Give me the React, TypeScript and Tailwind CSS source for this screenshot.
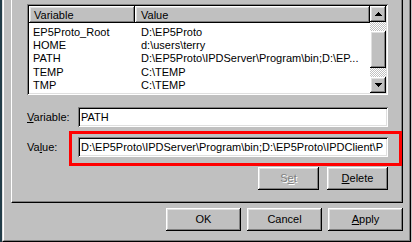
import React from "react";

// Win95 bevels
const raised = "shadow-[inset_-1px_-1px_#000,inset_1px_1px_#fff,inset_-2px_-2px_#808080,inset_2px_2px_#dfdfdf]";
const sunken = "shadow-[inset_1px_1px_#808080,inset_-1px_-1px_#fff,inset_2px_2px_#000,inset_-2px_-2px_#dfdfdf]";

function Arrow({ down }: { down?: boolean }) {
    return (
        <svg width="7" height="4" viewBox="0 0 7 4" shapeRendering="crispEdges">
            {down ? (
                <path d="M0 0h7v1h-1v1h-1v1h-1v1h-1v-1h-1v-1h-1v-1h-1z" fill="#000" />
            ) : (
                <path d="M3 0h1v1h1v1h1v1h1v1H0V3h1V2h1V1h1z" fill="#000" />
            )}
        </svg>
    );
}

function Button({ children, w, disabled }: { children: React.ReactNode; w: string; disabled?: boolean }) {
    return (
        <button
            type="button"
            className={`${w} h-[23px] flex items-center justify-center bg-[#c0c0c0] ${raised} ${
                disabled ? "text-[#808080] [text-shadow:1px_1px_0_#fff]" : "text-black"
            }`}
        >
            {children}
        </button>
    );
}

const rows = [
    ["EP5Proto_Root", "D:\\EP5Proto"],
    ["HOME", "d:\\users\\terry"],
    ["PATH", "D:\\EP5Proto\\IPDServer\\Program\\bin;D:\\EP..."],
    ["TEMP", "C:\\TEMP"],
    ["TMP", "C:\\TEMP"],
];

function ListView() {
    return (
        <div className={`w-[361px] h-[91px] p-[2px] flex bg-white ${sunken}`}>
            <div className="flex-1 flex flex-col overflow-hidden">
                {/* column headers */}
                <div className="h-[17px] flex bg-[#c0c0c0] shrink-0">
                    <div className={`w-[106px] pl-[5px] pt-[3px] leading-[13px] ${raised}`}>Variable</div>
                    <div className={`flex-1 pl-[6px] pt-[3px] leading-[13px] ${raised}`}>Value</div>
                </div>
                <div className="flex-1 pt-[2.6px] overflow-hidden">
                    {rows.map(([name, value]) => (
                        <div key={name} className="flex h-[13.4px] leading-[13.4px] whitespace-nowrap">
                            <div className="w-[106px] pl-[4px]">{name}</div>
                            <div className="flex-1 pl-[6px]">{value}</div>
                        </div>
                    ))}
                </div>
            </div>

            {/* scrollbar */}
            <div className="w-[16px] flex flex-col">
                <div className={`h-[16px] flex items-center justify-center bg-[#c0c0c0] ${raised}`}>
                    <Arrow />
                </div>
                <div className="h-[9px] bg-[repeating-conic-gradient(#c0c0c0_0_25%,#fff_0_50%)] bg-[length:2px_2px]" />
                <div className={`h-[37px] bg-[#c0c0c0] ${raised}`} />
                <div className="flex-1 bg-[repeating-conic-gradient(#c0c0c0_0_25%,#fff_0_50%)] bg-[length:2px_2px]" />
                <div className={`h-[16px] flex items-center justify-center bg-[#c0c0c0] ${raised}`}>
                    <Arrow down />
                </div>
            </div>
        </div>
    );
}

function Field({ children }: { children: React.ReactNode }) {
    return (
        <div className={`w-[310px] h-[20px] bg-white pl-[3px] pr-[2px] flex items-center overflow-hidden whitespace-nowrap ${sunken}`}>
            <span>{children}</span>
        </div>
    );
}

export default function App() {
    return (
        <div className="relative flex w-[412px] h-[242px] overflow-hidden bg-[#c0c0c0] border-l-2 border-[#213c48] font-['Liberation_Sans',Arial,sans-serif] text-[11px] text-black">
            <div className="flex flex-col w-[409px] h-[242px] border-l border-l-[#dfdfdf] border-r border-r-black border-b border-b-black">
                <div className="flex flex-1 flex-col pl-[7px] pr-[6px] border-l border-l-white border-r border-r-[#808080] border-b border-b-[#808080]">

                    {/* Environment tab page */}
                    <div className="w-[392px] h-[203px] border-l border-l-white border-r border-r-black border-b border-b-black shadow-[inset_-1px_-1px_#808080]">
                        <div className="pl-[15px] pt-[4px] flex flex-col">
                            <ListView />

                            <div className="mt-[12px] flex items-center">
                                <div className="w-[51px]">
                                    <span className="underline">V</span>ariable:
                                </div>
                                <Field>PATH</Field>
                            </div>

                            <div className="mt-[10px] flex items-center">
                                <div className="w-[51px]">
                                    Va<span className="underline">l</span>ue:
                                </div>
                                <Field>D:\EP5Proto\IPDServer\Program\bin;D:\EP5Proto\IPDClient\P</Field>
                            </div>

                            <div className="mt-[10px] w-[361px] flex justify-end gap-[8px]">
                                <Button w="w-[61px]" disabled>
                                    S<span className="underline">e</span>t
                                </Button>
                                <Button w="w-[61px]">
                                    <span className="underline">D</span>elete
                                </Button>
                            </div>
                        </div>
                    </div>

                    {/* dialog buttons */}
                    <div className="mt-[5px] flex justify-end gap-[6px]">
                        <Button w="w-[75px]">OK</Button>
                        <Button w="w-[75px]">Cancel</Button>
                        <Button w="w-[75px]">
                            <span className="underline">A</span>pply
                        </Button>
                    </div>
                </div>
            </div>

            {/* red highlight annotation */}
            <div className="absolute left-[67px] top-[131px] w-[333px] h-[35px] border-[3px] border-[#ff0000] pointer-events-none" />
        </div>
    );
}
